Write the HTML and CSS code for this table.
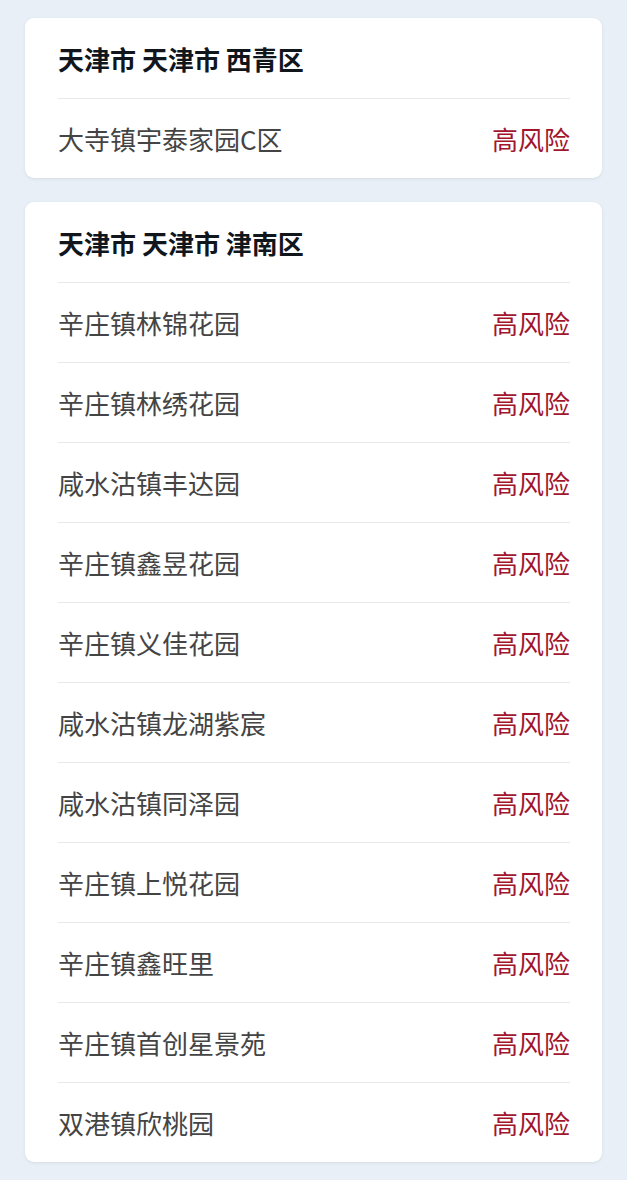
FILE: index.html
```html
<!DOCTYPE html>
<html lang="zh-CN">
<head>
<meta charset="utf-8">
<link rel="stylesheet" href="styles.css">
</head>
<body>
<div class="page">
  <section class="card">
    <div class="card-head">天津市 天津市 西青区</div>
    <div class="row"><span class="name">大寺镇宇泰家园C区</span><span class="risk">高风险</span></div>
  </section>
  <section class="card">
    <div class="card-head">天津市 天津市 津南区</div>
    <div class="row"><span class="name">辛庄镇林锦花园</span><span class="risk">高风险</span></div>
    <div class="row"><span class="name">辛庄镇林绣花园</span><span class="risk">高风险</span></div>
    <div class="row"><span class="name">咸水沽镇丰达园</span><span class="risk">高风险</span></div>
    <div class="row"><span class="name">辛庄镇鑫昱花园</span><span class="risk">高风险</span></div>
    <div class="row"><span class="name">辛庄镇义佳花园</span><span class="risk">高风险</span></div>
    <div class="row"><span class="name">咸水沽镇龙湖紫宸</span><span class="risk">高风险</span></div>
    <div class="row"><span class="name">咸水沽镇同泽园</span><span class="risk">高风险</span></div>
    <div class="row"><span class="name">辛庄镇上悦花园</span><span class="risk">高风险</span></div>
    <div class="row"><span class="name">辛庄镇鑫旺里</span><span class="risk">高风险</span></div>
    <div class="row"><span class="name">辛庄镇首创星景苑</span><span class="risk">高风险</span></div>
    <div class="row"><span class="name">双港镇欣桃园</span><span class="risk">高风险</span></div>
  </section>
</div>
</body>
</html>
```
FILE: styles.css
```css
html, body {
  margin: 0;
  padding: 0;
  background: #e8eff6;
}
body {
  font-family: "Noto Sans CJK SC", "Noto Sans", sans-serif;
}
.page {
  padding: 18px 25px 17px;
  display: flex;
  flex-direction: column;
  gap: 24px;
}
.card {
  background: #ffffff;
  border-radius: 9px;
  padding: 0 32px 0 33px;
  box-shadow: 0 1px 3px rgba(120, 140, 165, 0.18);
}
.card-head {
  height: 80px;
  display: flex;
  align-items: center;
  box-sizing: border-box;
  font-size: 26px;
  font-weight: 700;
  color: #10161c;
}
.row {
  height: 80px;
  box-sizing: border-box;
  border-top: 1px solid #e6e8ea;
  display: flex;
  align-items: center;
  justify-content: space-between;
  font-size: 26px;
}
.name {
  color: #444444;
}
.risk {
  color: #a3152d;
}
```
